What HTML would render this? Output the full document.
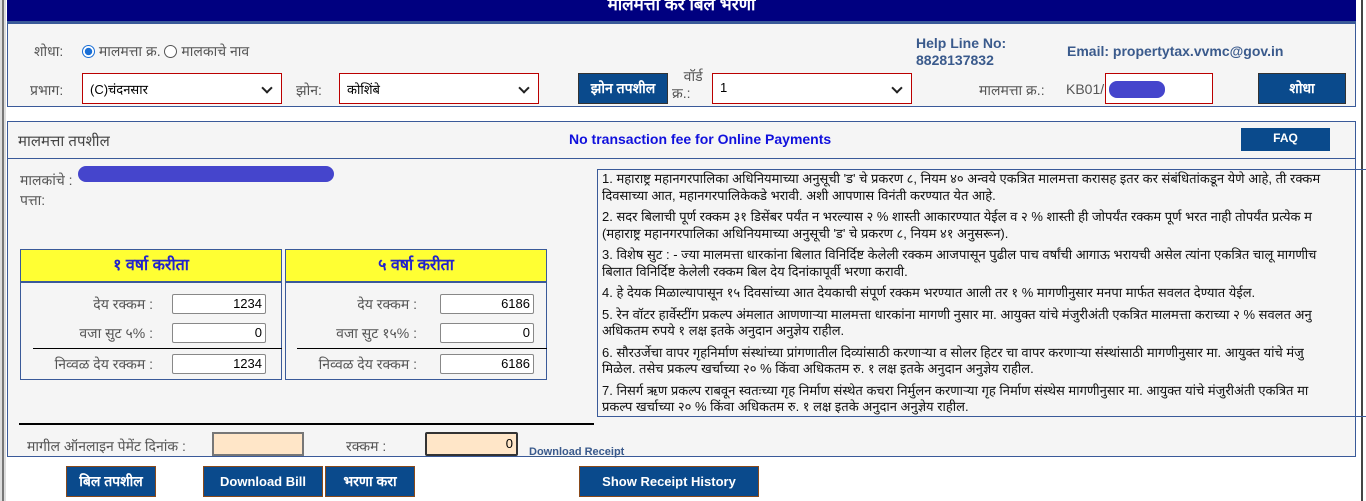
<!DOCTYPE html>
<html><head><meta charset="utf-8"><style>
*{box-sizing:border-box;margin:0;padding:0}
body{width:1366px;height:501px;background:#fff;font-family:"Liberation Sans",sans-serif;font-size:13px;color:#555;position:relative;overflow:hidden}
.a{position:absolute}
.hdr{left:7px;top:0;width:1349px;height:23px;background:#000080;border-bottom:2px solid #3a5a99;color:#fff;font-weight:bold;font-size:17px;text-align:center;line-height:10px}
.p{border:1px solid #3a5a99;background:#f5f5f5}
.sel{background:#fff;border:1px solid #b00;height:31px;padding:6px 7px;color:#000;font-size:13px}
.sel:after{content:"";position:absolute;right:10px;top:10px;width:6px;height:6px;border-right:2px solid #222;border-bottom:2px solid #222;transform:rotate(45deg)}
.btn{background:#0a4a8c;color:#fff;font-weight:bold;text-align:center;border:1px solid #333}
.in{background:#fff;border:1px solid #888;border-radius:2px;height:20px;text-align:right;padding-right:3px;color:#000;font-size:13px;line-height:18px}
.lbl{text-align:right;color:#555;font-size:14px}
.yl{background:#ffff33;color:#2222cc;font-weight:bold;font-size:16px;text-align:center;line-height:31px;border-bottom:2px solid #3a5a99;height:33px}
.tb{border:1px solid #3a5a99;background:#f5f5f5;height:131px;top:249px}
.notes{font-size:13px;color:#111;line-height:16.5px}
.notes p{margin-bottom:5px;white-space:nowrap}
</style></head><body>
<div class="a" style="left:0;top:0;width:6px;height:501px;background:#ddd"></div>
<div class="a" style="left:2px;top:0;width:2px;height:501px;background:#777"></div>
<div class="a" style="left:1361px;top:0;width:2px;height:501px;background:#444"></div>
<div class="a hdr">मालमत्ता कर बिल भरणा</div>
<div class="a p" style="left:7px;top:23px;width:1349px;height:84px"></div>
<div class="a" style="left:34px;top:42px;font-size:14px">शोधा:</div>
<div class="a" style="left:82px;top:42px;font-size:14px"><span style="display:inline-block;width:13px;height:13px;border-radius:50%;border:1px solid #1a6fd6;background:radial-gradient(#1a6fd6 45%,#fff 50%);vertical-align:-2px"></span> मालमत्ता क्र. <span style="display:inline-block;width:13px;height:13px;border-radius:50%;border:1px solid #555;background:#fff;vertical-align:-2px"></span> मालकाचे नाव</div>
<div class="a" style="left:30px;top:81px;font-size:14px">प्रभाग:</div>
<div class="a sel" style="left:82px;top:73px;width:200px">(C)चंदनसार</div>
<div class="a" style="left:296px;top:81px;font-size:14px">झोन:</div>
<div class="a sel" style="left:339px;top:73px;width:200px">कोशिंबे</div>
<div class="a btn" style="left:578px;top:73px;width:90px;height:31px;line-height:29px;font-size:14px">झोन तपशील</div>
<div class="a" style="left:672px;top:68px;font-size:14px;line-height:17px">&nbsp;&nbsp;&nbsp;वॉर्ड<br>क्र.:</div>
<div class="a sel" style="left:712px;top:73px;width:200px">1</div>
<div class="a" style="left:916px;top:35px;font-weight:bold;color:#3a5a8c;font-size:14px;line-height:17px">Help Line No:<br>8828137832</div>
<div class="a" style="left:1067px;top:43px;font-weight:bold;color:#3a5a8c;font-size:14px">Email: propertytax.vvmc@gov.in</div>
<div class="a" style="left:979px;top:81px;font-size:14px">मालमत्ता क्र.:</div>
<div class="a" style="left:1066px;top:81px;font-size:14px">KB01/</div>
<div class="a" style="left:1105px;top:73px;width:108px;height:31px;border:1px solid #b00;background:#fff"></div>
<div class="a" style="left:1109px;top:81px;width:56px;height:17px;border-radius:8px;background:#4545cc"></div>
<div class="a btn" style="left:1258px;top:73px;width:88px;height:31px;line-height:29px;font-size:14px">शोधा</div>

<div class="a p" style="left:7px;top:121px;width:1349px;height:336px"></div>
<div class="a" style="left:7px;top:158px;width:1349px;height:1px;background:#3a5a99"></div>
<div class="a" style="left:18px;top:131px;font-size:15px;color:#444">मालमत्ता तपशील</div>
<div class="a" style="left:569px;top:131px;font-size:14px;font-weight:bold;color:#1010dd">No transaction fee for Online Payments</div>
<div class="a btn" style="left:1241px;top:128px;width:89px;height:23px;line-height:21px;font-size:12px;border:none">FAQ</div>
<div class="a" style="left:20px;top:171px;font-size:14px">मालकांचे :</div>
<div class="a" style="left:78px;top:166px;width:256px;height:16px;border-radius:8px;background:#4545cc"></div>
<div class="a" style="left:20px;top:191px;font-size:14px">पत्ता:</div>

<div class="a tb" style="left:20px;width:262px"><div class="yl">१ वर्षा करीता</div></div>
<div class="a tb" style="left:285px;width:262px"><div class="yl">५ वर्षा करीता</div></div>
<div class="a" style="left:33px;top:348px;width:249px;height:1px;background:#000"></div>
<div class="a" style="left:297px;top:348px;width:250px;height:1px;background:#000"></div>
<div class="a lbl" style="left:20px;top:295px;width:133px">देय रक्कम :</div>
<div class="a lbl" style="left:20px;top:324px;width:133px">वजा सुट ५% :</div>
<div class="a lbl" style="left:20px;top:355px;width:133px">निव्वळ देय रक्कम :</div>
<div class="a in" style="left:172px;top:294px;width:94px">1234</div>
<div class="a in" style="left:172px;top:323px;width:94px">0</div>
<div class="a in" style="left:172px;top:354px;width:94px">1234</div>
<div class="a lbl" style="left:285px;top:295px;width:132px">देय रक्कम :</div>
<div class="a lbl" style="left:285px;top:324px;width:132px">वजा सुट १५% :</div>
<div class="a lbl" style="left:285px;top:355px;width:132px">निव्वळ देय रक्कम :</div>
<div class="a in" style="left:440px;top:294px;width:94px">6186</div>
<div class="a in" style="left:440px;top:323px;width:94px">0</div>
<div class="a in" style="left:440px;top:354px;width:94px">6186</div>

<div class="a" style="left:19px;top:423px;width:575px;height:2px;background:#000"></div>
<div class="a" style="left:27px;top:437px;font-size:14px">मागील ऑनलाइन पेमेंट दिनांक :</div>
<div class="a" style="left:212px;top:432px;width:92px;height:24px;background:#ffe6c8;border:2px solid #777"></div>
<div class="a" style="left:346px;top:437px;font-size:14px">रक्कम :</div>
<div class="a in" style="left:425px;top:432px;width:93px;height:24px;background:#ffe6c8;border:2px solid #333;line-height:20px">0</div>
<div class="a" style="left:529px;top:446px;font-size:11px;font-weight:bold;color:#3a5a8c;text-decoration:underline">Download Receipt</div>

<div class="a notes" style="left:597px;top:169px;width:770px;height:248px;border:1px solid #3a5a99;padding:1px 4px;overflow:hidden">
<p>1. महाराष्ट्र महानगरपालिका अधिनियमाच्या अनुसूची 'ड' चे प्रकरण ८, नियम ४० अन्वये एकत्रित मालमत्ता करासह इतर कर संबंधितांकडून येणे आहे, ती रक्कम<br>दिवसाच्या आत, महानगरपालिकेकडे भरावी. अशी आपणास विनंती करण्यात येत आहे.</p>
<p>2. सदर बिलाची पूर्ण रक्कम ३१ डिसेंबर पर्यंत न भरल्यास २ % शास्ती आकारण्यात येईल व २ % शास्ती ही जोपर्यंत रक्कम पूर्ण भरत नाही तोपर्यंत प्रत्येक म<br>(महाराष्ट्र महानगरपालिका अधिनियमाच्या अनुसूची 'ड' चे प्रकरण ८, नियम ४१ अनुसरून).</p>
<p>3. विशेष सुट : - ज्या मालमत्ता धारकांना बिलात विनिर्दिष्ट केलेली रक्कम आजपासून पुढील पाच वर्षांची आगाऊ भरायची असेल त्यांना एकत्रित चालू मागणीच<br>बिलात विनिर्दिष्ट केलेली रक्कम बिल देय दिनांकापूर्वी भरणा करावी.</p>
<p>4. हे देयक मिळाल्यापासून १५ दिवसांच्या आत देयकाची संपूर्ण रक्कम भरण्यात आली तर १ % मागणीनुसार मनपा मार्फत सवलत देण्यात येईल.</p>
<p>5. रेन वॉटर हार्वेस्टींग प्रकल्प अंमलात आणणाऱ्या मालमत्ता धारकांना मागणी नुसार मा. आयुक्त यांचे मंजुरीअंती एकत्रित मालमत्ता कराच्या २ % सवलत अनु<br>अधिकतम रुपये १ लक्ष इतके अनुदान अनुज्ञेय राहील.</p>
<p>6. सौरउर्जेचा वापर गृहनिर्माण संस्थांच्या प्रांगणातील दिव्यांसाठी करणाऱ्या व सोलर हिटर चा वापर करणाऱ्या संस्थांसाठी मागणीनुसार मा. आयुक्त यांचे मंजु<br>मिळेल. तसेच प्रकल्प खर्चाच्या २० % किंवा अधिकतम रु. १ लक्ष इतके अनुदान अनुज्ञेय राहील.</p>
<p>7. निसर्ग ऋण प्रकल्प राबवून स्वतःच्या गृह निर्माण संस्थेत कचरा निर्मुलन करणाऱ्या गृह निर्माण संस्थेस मागणीनुसार मा. आयुक्त यांचे मंजुरीअंती एकत्रित मा<br>प्रकल्प खर्चाच्या २० % किंवा अधिकतम रु. १ लक्ष इतके अनुदान अनुज्ञेय राहील.</p>
</div>

<div class="a btn" style="left:66px;top:466px;width:90px;height:31px;line-height:29px;font-size:14px;border-color:#8a4a1a">बिल तपशील</div>
<div class="a btn" style="left:203px;top:466px;width:120px;height:31px;line-height:29px;font-size:13px;border-color:#8a4a1a">Download Bill</div>
<div class="a btn" style="left:325px;top:466px;width:90px;height:31px;line-height:29px;font-size:14px;border-color:#8a4a1a">भरणा करा</div>
<div class="a btn" style="left:579px;top:466px;width:180px;height:31px;line-height:29px;font-size:13px;border-color:#8a4a1a">Show Receipt History</div>
</body></html>
